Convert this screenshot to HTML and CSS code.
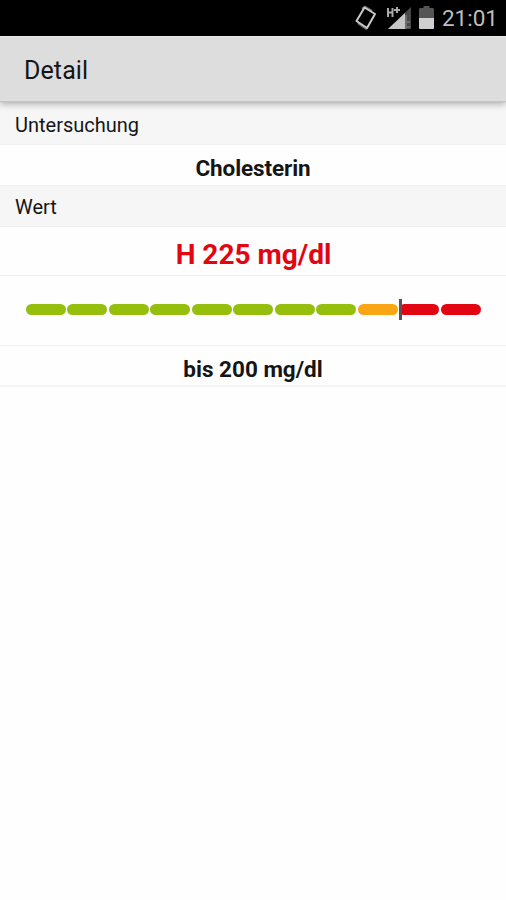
FILE: index.html
```html
<!DOCTYPE html>
<html lang="de">
<head>
    <meta charset="utf-8">
    <meta name="viewport" content="width=device-width, initial-scale=1">
    <title>Detail</title>
    <link rel="stylesheet" href="styles.css">
</head>
<body>
    <!-- Status bar -->
    <div class="status">
        <svg class="status-icons" width="82" height="36" viewBox="0 0 82 36">
            <!-- rotate -->
            <path d="M9 9 L12 7 L19 11 M5 23 L13 28.500 L16 24" fill="none" stroke="#666" stroke-width="2.500"/>
            <path d="M11.500 7.500 L22 14 L14 28 L3.500 21 Z" fill="#000" stroke="#c9c9c9" stroke-width="2" stroke-linejoin="round"/>
            <!-- signal -->
            <path d="M58 7 V29 H35 Z" fill="#484848"/>
            <path d="M52 13 V29 H35 Z" fill="#c6c6c6"/>
            <path d="M53 15 V29 M53 22 H57 M53 27 H57" stroke="#777" stroke-width="1.500"/>
            <path d="M35 8 V17 M39.500 8 V17 M35 12.500 H40 M41 10 H47 M44 7 V13" fill="none" stroke="#aaa" stroke-width="2"/>
            <!-- battery -->
            <path d="M67 8 H70.500 V6 H76.500 V8 H80 Q81 8 81 10 V18 H66 V10 Q66 8 67 8 Z" fill="#555"/>
            <path d="M66 18 H81 V28 Q81 29 80 29 H67 Q66 29 66 28 Z" fill="#d0d0d0"/>
        </svg>
        <span class="clock">21:01</span>
    </div>

    <!-- Action bar -->
    <header class="bar">
        <h1>Detail</h1>
    </header>

    <main>
        <h2 class="label first">Untersuchung</h2>
        <p class="name">Cholesterin</p>

        <h2 class="label">Wert</h2>
        <p class="value">H 225 mg/dl</p>

        <div class="scale">
            <i></i><i></i><i></i><i></i><i></i><i></i><i></i><i></i>
            <i class="warn"></i>
            <i class="high marked"></i>
            <i class="high"></i>
        </div>

        <p class="name limit">bis 200 mg/dl</p>
    </main>
</body>
</html>
```

FILE: styles.css
```css
* {
    box-sizing: border-box;
}

:root {
    --green:  #96bf0d;
    --orange: #faa614;
    --red:    #e20613;
    --line:   #f0f0f0;
}

body {
    margin: 0;
    min-height: 100vh;

    color: #151515;
    background: #fefefe;
    font-family: Roboto, "Liberation Sans", sans-serif;
}

h1, h2, p {
    margin: 0;
}

.status {
    display: flex;
    justify-content: flex-end;
    height: 36px;
    padding-right: 8px;

    color: #bebebe;
    background: #000;
}

.status-icons {
    margin-right: 7px;
}

.clock {
    font-size: 22.5px;
    line-height: 37px;
}

.bar {
    position: relative;
    height: 66px;
    padding-left: 24px;

    background: #ddd;
    border-top: 1px solid #e8e8e8;
    border-bottom: 1px solid #c6c6c6;
    box-shadow: 0 2px 7px rgba(0, 0, 0, 0.3);
}

.bar h1 {
    font-size: 25px;
    font-weight: 400;
    line-height: 68px;
    letter-spacing: 0.1px;
}

.label {
    height: 42px;
    padding-left: 15px;

    background: #f6f6f6;
    border-top: 1px solid var(--line);
    border-bottom: 1px solid var(--line);

    font-size: 20px;
    font-weight: 400;
    line-height: 42px;
}

.label.first {
    height: 43px;
    line-height: 44px;
}

.name {
    height: 40px;

    font-size: 22.5px;
    font-weight: 700;
    line-height: 47px;
    text-align: center;
}

.value {
    height: 49px;
    padding-left: 1px;

    color: var(--red);
    border-bottom: 1px solid var(--line);

    font-size: 28px;
    font-weight: 700;
    line-height: 56px;
    text-align: center;
}

.scale {
    display: flex;
    align-items: center;
    gap: 1.8px;
    height: 70px;
    padding: 0 25.5px 2px 26px;

    border-bottom: 1px solid var(--line);
}

.scale i {
    position: relative;
    flex: 1;
    height: 11px;

    background: var(--green);
    border-radius: 6px;
}

.scale .warn {
    background: var(--orange);
}

.scale .high {
    background: var(--red);
}

/* position of the measured value */
.marked::before {
    content: "";
    position: absolute;
    top: -5px;
    left: -0.4px;
    width: 3px;
    height: 21px;

    background: #555;
}

.name:not(.limit) {
    letter-spacing: -0.1px;
}

.limit {
    height: 41px;
    border-bottom: 2px solid #f4f4f4;
}
```
